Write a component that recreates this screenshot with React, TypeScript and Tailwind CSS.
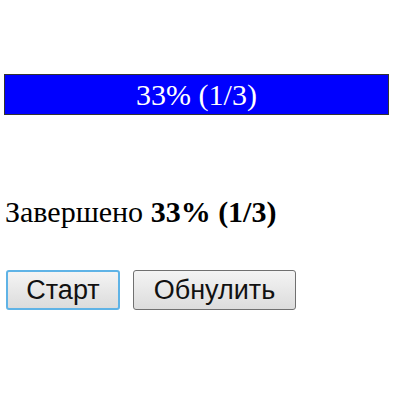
export default function App() {
  return (
    <div className="w-[400px] h-[400px] bg-white pt-[74px] pl-[4px]" style={{ fontFamily: '"Liberation Serif", serif' }}>
      <div className="w-[385px] h-[41px] bg-[#0000ff] border border-[#333] flex items-center justify-center text-white text-[30px] leading-none">
        <span className="mt-[1px]">33% (1/3)</span>
      </div>
      <div className="mt-[82px] pl-[1px] text-[30px] leading-none text-black">
        Завершено <b>33% (1/3)</b>
      </div>
      <div className="mt-[43px] pl-[2px] flex gap-[13px]" style={{ fontFamily: '"Liberation Sans", Arial, sans-serif' }}>
        <button className="w-[114px] h-[40px] rounded-[3px] border-2 border-[#5fb3e6] bg-gradient-to-b from-[#f4f4f4] to-[#dcdcdc] text-[27px] text-[#111] leading-none">
          Старт
        </button>
        <button className="w-[163px] h-[40px] rounded-[3px] border border-[#707070] bg-gradient-to-b from-[#f4f4f4] to-[#dcdcdc] text-[27px] text-[#111] leading-none">
          Обнулить
        </button>
      </div>
    </div>
  );
}
